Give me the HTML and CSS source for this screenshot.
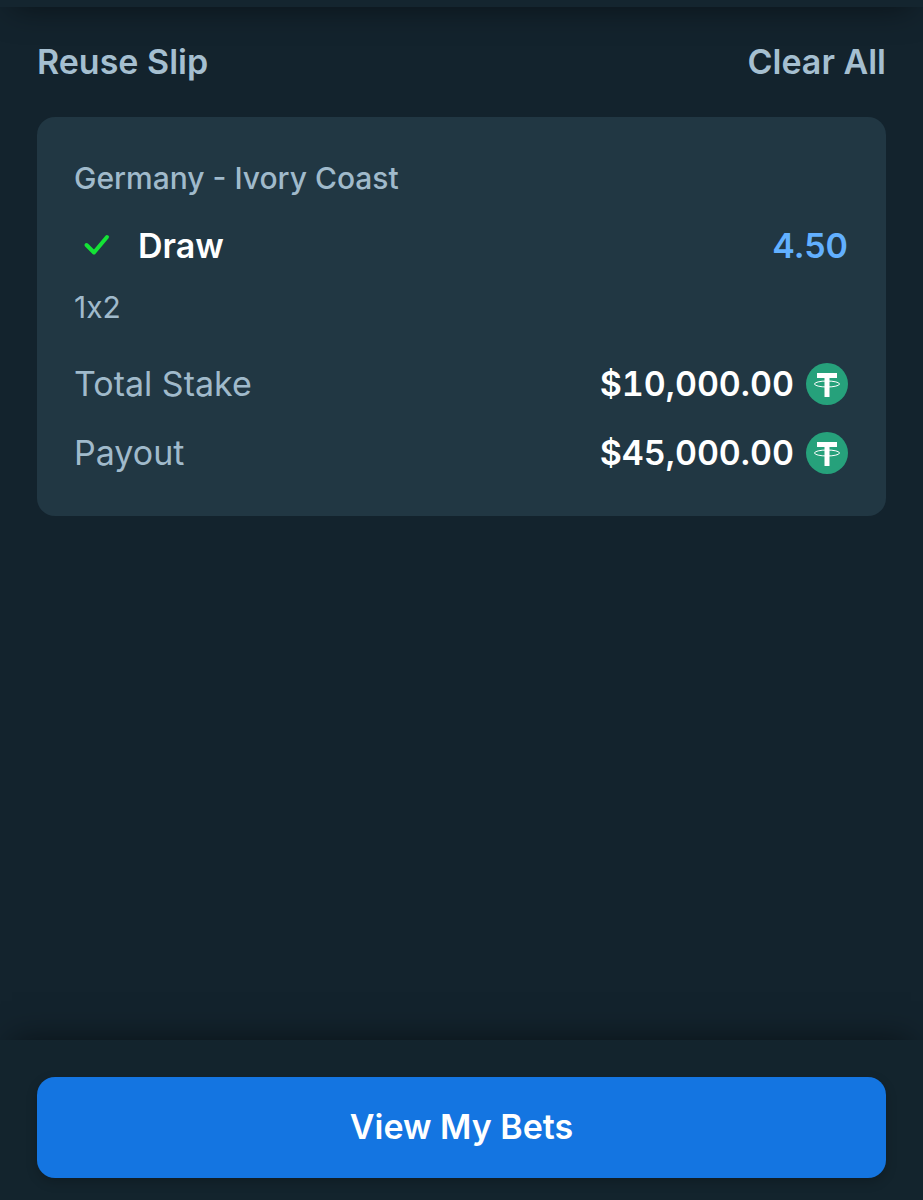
FILE: index.html
```
<!DOCTYPE html>
<html lang="en">
<head>
    <meta charset="UTF-8">
    <meta name="viewport" content="width=device-width, initial-scale=1.0">
    <title>Bet Slip</title>
    <link rel="stylesheet" href="styles.css">
</head>
<body>
    <div class="betslip">
        <header class="top-bar"></header>

        <main class="content">
            <div class="actions">
                <button type="button" class="link-btn">Reuse Slip</button>
                <button type="button" class="link-btn">Clear All</button>
            </div>

            <section class="card">
                <h2 class="event">Germany - Ivory Coast</h2>
                <div class="selection">
                    <svg class="check" viewBox="0 0 46 46" aria-hidden="true">
                        <path d="M12.500 22l7.500 7.500L33 14"/>
                    </svg>
                    <span class="outcome">Draw</span>
                    <span class="odds">4.50</span>
                </div>
                <p class="market">1x2</p>

                <div class="row">
                    <span class="row-label">Total Stake</span>
                    <span class="amount">$10,000.00</span>
                    <svg class="coin" viewBox="0 0 42 42" role="img" aria-label="USDT">
                        <circle class="coin-bg" cx="21" cy="21" r="21"/>
                        <path class="coin-mark" d="M11 10h20v5h-7.500v19h-5V15H11z"/>
                        <ellipse class="coin-ring" cx="21" cy="21" rx="12.500" ry="3"/>
                    </svg>
                </div>
                <div class="row">
                    <span class="row-label">Payout</span>
                    <span class="amount">$45,000.00</span>
                    <svg class="coin" viewBox="0 0 42 42" role="img" aria-label="USDT">
                        <circle class="coin-bg" cx="21" cy="21" r="21"/>
                        <path class="coin-mark" d="M11 10h20v5h-7.500v19h-5V15H11z"/>
                        <ellipse class="coin-ring" cx="21" cy="21" rx="12.500" ry="3"/>
                    </svg>
                </div>
            </section>
        </main>

        <footer class="bottom-bar">
            <button type="button" class="view-btn">View My Bets</button>
        </footer>
    </div>
</body>
</html>
```

FILE: styles.css
```
* {
    box-sizing: border-box;
}
body {
    margin: 0;
    background: #13232d;
    color: #fff;
    font-family: Inter, "Open Sans", sans-serif;
    font-size: 34px;
    line-height: 48px;
}
.betslip {
    display: flex;
    flex-direction: column;
    min-height: 100vh;
    overflow: hidden;
}
/* only the lower edge of the bar shows */
.top-bar {
    flex: none;
    height: 80px;
    margin-top: -73px;
    background: #14252f;
    box-shadow: 0 12px 32px -12px rgba(0, 0, 0, 0.5);
}
.content {
    flex: 1;
    padding: 31px 37px;
}
.actions {
    display: flex;
    justify-content: space-between;
    margin-bottom: 31px;
}
.link-btn {
    padding: 0;
    border: none;
    background: none;
    color: #a5bfd0;
    font: inherit;
    font-weight: 600;
    cursor: pointer;
}
.link-btn:hover {
    color: #fff;
}
.card {
    padding: 37px 38px 39px 37px;
    border-radius: 18px;
    background: #213743;
}
.event {
    margin: 0 0 20px;
    color: #a0bacb;
    font-size: 30px;
    font-weight: 500;
}
.selection {
    display: flex;
    align-items: center;
    font-weight: 600;
}
.check {
    width: 46px;
    height: 46px;
    margin-right: 18px;
    fill: none;
    stroke: #14e336;
    stroke-width: 4;
    stroke-linecap: round;
    stroke-linejoin: round;
}
.odds {
    margin-left: auto;
    color: #62b0ff;
}
.market {
    margin: 13px 0 29px;
    color: #a0bacb;
    font-size: 30px;
    font-variant-ligatures: no-contextual;
}
.row {
    display: flex;
    align-items: center;
}
.row + .row {
    margin-top: 21px;
}
.row-label {
    flex: 1;
    color: #a0bacb;
}
.amount {
    margin-right: 12px;
    font-weight: 600;
    font-variant-numeric: tabular-nums;
}
.coin {
    width: 42px;
    height: 42px;
}
.coin-bg {
    fill: #26a17b;
}
.coin-mark {
    fill: #fff;
}
.coin-ring {
    fill: none;
    stroke: #fff;
    stroke-width: 1;
}
.bottom-bar {
    padding: 37px 37px 22px;
    background: #13242d;
    box-shadow: 0 -12px 32px -12px rgba(0, 0, 0, 0.5);
}
.view-btn {
    display: block;
    width: 100%;
    padding: 26px 26px 27px;
    border: none;
    border-radius: 18px;
    background: #1475e1;
    box-shadow: 0 4px 12px rgba(0, 0, 0, 0.2);
    color: #fff;
    font: inherit;
    font-weight: 600;
    cursor: pointer;
}
.view-btn:hover {
    background: #105eb4;
}
```
